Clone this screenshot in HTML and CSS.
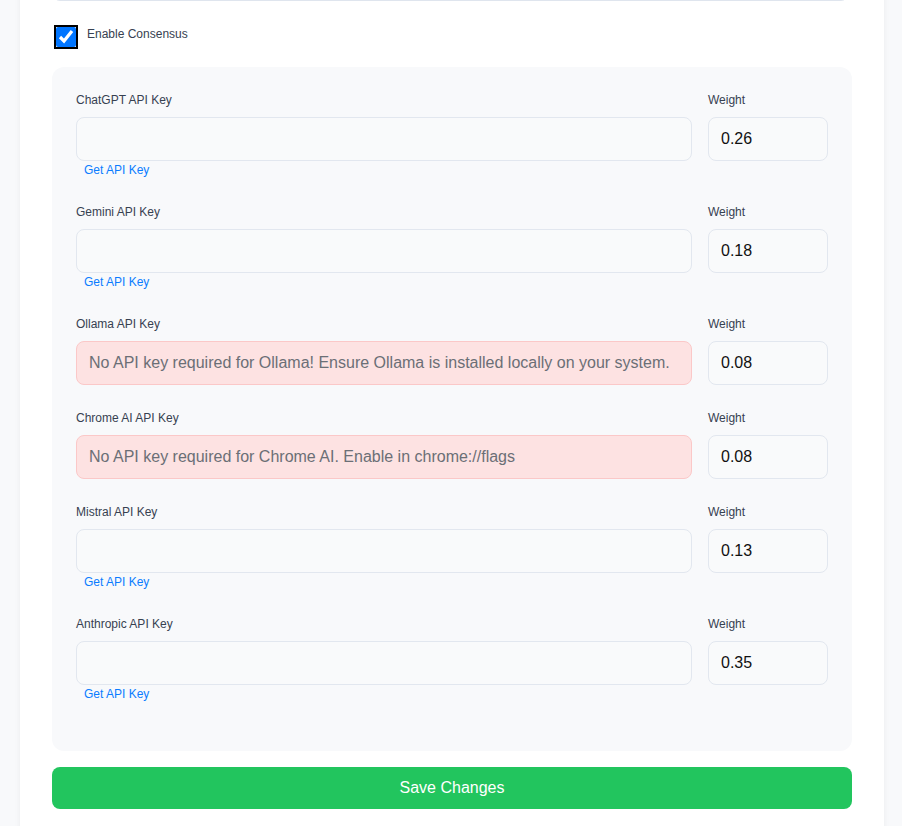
FILE: index.html
```html
<!DOCTYPE html>
<html lang="en">
<head>
    <meta charset="UTF-8">
    <meta name="viewport" content="width=device-width, initial-scale=1.0">
    <title>Settings</title>
    <link rel="stylesheet" href="styles.css">
</head>
<body>
    <div class="card">
        <div class="prev-field"></div>

        <div class="toggle-row">
            <input type="checkbox" id="consensus" class="toggle" checked>
            <label for="consensus">Enable Consensus</label>
        </div>

        <div class="consensus-panel">
            <div class="provider">
                <div class="key-col">
                    <label for="key-chatgpt">ChatGPT API Key</label>
                    <input type="text" id="key-chatgpt" class="field">
                    <a href="#" class="get-key">Get API Key</a>
                </div>
                <div class="weight-col">
                    <label for="w-chatgpt">Weight</label>
                    <input type="text" id="w-chatgpt" class="field" value="0.26">
                </div>
            </div>

            <div class="provider">
                <div class="key-col">
                    <label for="key-gemini">Gemini API Key</label>
                    <input type="text" id="key-gemini" class="field">
                    <a href="#" class="get-key">Get API Key</a>
                </div>
                <div class="weight-col">
                    <label for="w-gemini">Weight</label>
                    <input type="text" id="w-gemini" class="field" value="0.18">
                </div>
            </div>

            <div class="provider">
                <div class="key-col">
                    <label>Ollama API Key</label>
                    <div class="notice">No API key required for Ollama! Ensure Ollama is installed locally on your system.</div>
                </div>
                <div class="weight-col">
                    <label for="w-ollama">Weight</label>
                    <input type="text" id="w-ollama" class="field" value="0.08">
                </div>
            </div>

            <div class="provider">
                <div class="key-col">
                    <label>Chrome AI API Key</label>
                    <div class="notice">No API key required for Chrome AI. Enable in chrome://flags</div>
                </div>
                <div class="weight-col">
                    <label for="w-chrome">Weight</label>
                    <input type="text" id="w-chrome" class="field" value="0.08">
                </div>
            </div>

            <div class="provider">
                <div class="key-col">
                    <label for="key-mistral">Mistral API Key</label>
                    <input type="text" id="key-mistral" class="field">
                    <a href="#" class="get-key">Get API Key</a>
                </div>
                <div class="weight-col">
                    <label for="w-mistral">Weight</label>
                    <input type="text" id="w-mistral" class="field" value="0.13">
                </div>
            </div>

            <div class="provider">
                <div class="key-col">
                    <label for="key-anthropic">Anthropic API Key</label>
                    <input type="text" id="key-anthropic" class="field">
                    <a href="#" class="get-key">Get API Key</a>
                </div>
                <div class="weight-col">
                    <label for="w-anthropic">Weight</label>
                    <input type="text" id="w-anthropic" class="field" value="0.35">
                </div>
            </div>
        </div>

        <button class="save-btn">Save Changes</button>
    </div>
</body>
</html>
```

FILE: styles.css
```css
body {
    font-family: "Liberation Sans", Arial, sans-serif;
    background-color: #f8f9fb;
    margin: 0;
    padding: 0 18px 0 20px;
    color: #374151;
}
.card {
    background-color: white;
    padding: 0 32px 40px 32px;
    box-shadow: 0 0 6px rgba(0, 0, 0, 0.06);
    min-height: 826px;
    box-sizing: border-box;
}
.prev-field {
    height: 44px;
    margin-top: -43px;
    background-color: #f9fafb;
    border: 1px solid #dfe5ee;
    border-radius: 8px;
    box-sizing: border-box;
    margin-right: 3px;
}
.toggle-row {
    display: flex;
    align-items: flex-start;
    margin-top: 26px;
    margin-bottom: 20px;
    padding-left: 4px;
}
.toggle {
    width: 20px;
    height: 20px;
    margin: 0;
    accent-color: #0075ff;
    outline: 2px solid #000;
    outline-offset: 0;
    border-radius: 3px;
}
.toggle-row label {
    font-size: 12px;
    line-height: 18px;
    margin-top: -2px;
    margin-left: 11px;
}
.consensus-panel {
    background-color: #f8f9fb;
    border-radius: 12px;
    padding: 24px;
}
.provider {
    display: grid;
    grid-template-columns: 1fr 120px;
    gap: 16px;
    padding-bottom: 24px;
}
.provider label {
    display: block;
    font-size: 12px;
    line-height: 18px;
    margin-bottom: 8px;
}
.field, .notice {
    display: block;
    width: 100%;
    height: 44px;
    box-sizing: border-box;
    padding: 0 12px;
    font-family: inherit;
    font-size: 16px;
    color: #111;
    background-color: #f9fafb;
    border: 1px solid #e2e7ef;
    border-radius: 8px;
}
.notice {
    display: flex;
    align-items: center;
    background-color: #fde2e2;
    border-color: #fbc8c8;
    color: #6b6f76;
}
.get-key {
    display: block;
    font-size: 12px;
    line-height: 18px;
    padding-left: 8px;
    color: #0b7cff;
    text-decoration: none;
}
.save-btn {
    display: block;
    width: 100%;
    height: 42px;
    margin-top: 16px;
    background-color: #22c55e;
    color: white;
    border: none;
    border-radius: 8px;
    font-family: inherit;
    font-size: 16px;
    cursor: pointer;
}
.save-btn:hover {
    background-color: #16a34a;
}
```
